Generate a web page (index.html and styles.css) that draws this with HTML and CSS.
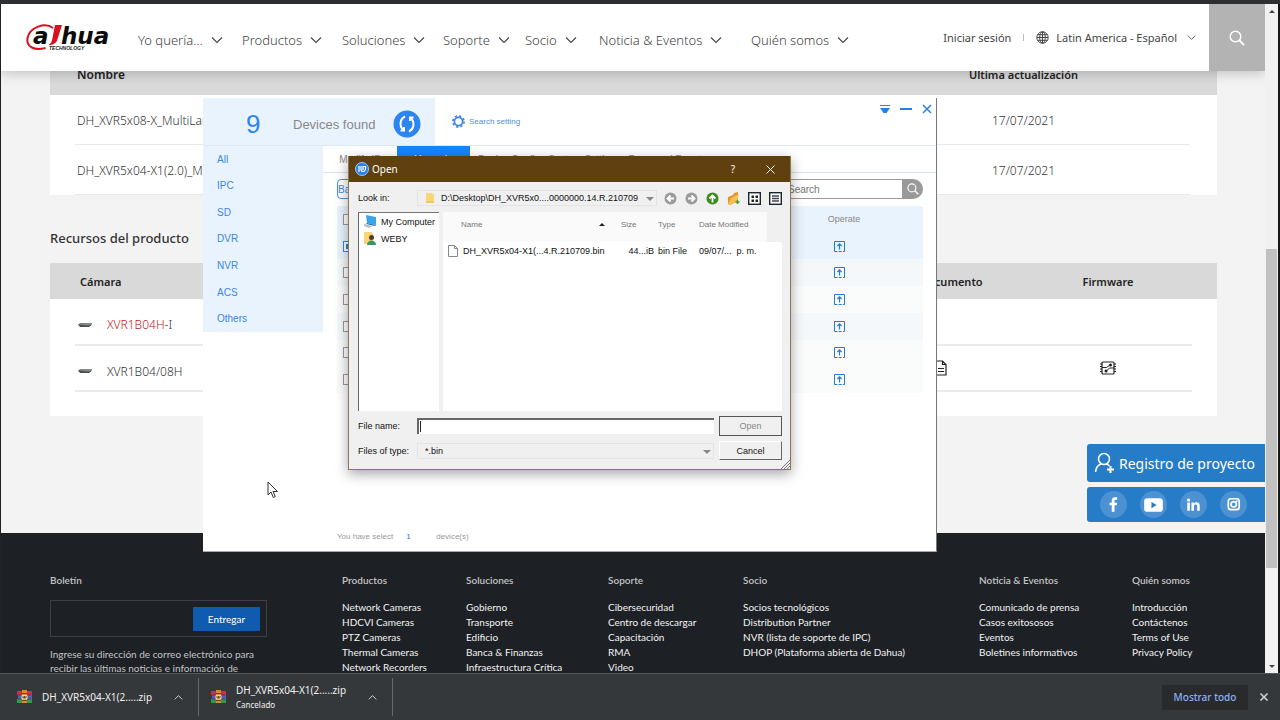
FILE: index.html
```html
<!DOCTYPE html>
<html lang="es">
<head>
<meta charset="utf-8">
<title>Dahua Technology</title>
<link rel="stylesheet" href="styles.css">
</head>
<body>
<svg class="defs" aria-hidden="true">
  <symbol id="chev" viewBox="0 0 12 12"><path d="M1 3.500l5 5 5-5" fill="none" stroke="currentColor" stroke-width="1.100"/></symbol>
  <symbol id="lens" viewBox="0 0 16 16"><circle cx="6.500" cy="6.500" r="5.300" fill="none" stroke="currentColor" stroke-width="1.500"/><path d="M10.400 10.400l4.600 4.600" stroke="currentColor" stroke-width="1.800"/></symbol>
  <symbol id="up" viewBox="0 0 11 11"><path d="M.5 10.500V.5h10v10" fill="none" stroke="currentColor"/><path d="M.5 10.500h10" stroke="currentColor" stroke-dasharray="3 1.200"/><path d="M5.500 8.500V3M3.400 5l2.100-2.200L7.600 5" fill="none" stroke="currentColor" stroke-width="1.200"/></symbol>
  <symbol id="rar" viewBox="0 0 15 14"><path fill="#c3353c" d="M0 1h15v4H0z"/><path fill="#4a63c8" d="M1 5h14v4H1z"/><path fill="#2f9a4c" d="M0 9h15v4H0z"/><path fill="#7a2a60" d="M1 4.400h13v1H1zM1 8.500h13v1H1z"/><path fill="#d88a2e" d="M5 0h5v13H5z"/><path fill="#7a4215" d="M5 3h5v1H5zM5 10h5v1H5z"/><rect x="4.500" y="5" width="6" height="4.500" rx="1" fill="#f4ddb0"/><path d="M6 6v2h3V6M7.500 6v2" stroke="#7a4215" fill="none"/></symbol>
  <symbol id="recorder" viewBox="0 0 14 6"><path d="M0 2.500L3 1h11l-1 2.500L11 5H2z" fill="#4c4f50"/><path d="M0 2.500L3 1h11v1l-3 1.500z" fill="#85898a"/></symbol>
</svg>
<div class="browser">
  <div class="tabstrip"></div>
  <div class="viewport">
    <div class="site">
      <header class="top">
        <a class="logo" href="#" aria-label="Dahua Technology">
          <svg width="86" height="30" viewBox="0 0 86 30">
            <path d="M27 5C19-1 4 4 1.500 15c-1.500 9 7 13 18 10" fill="none" stroke="#d8101e" stroke-width="2"/>
            <text class="logo-word" x="7" y="21">a</text>
            <text class="logo-word" x="35" y="21">hua</text>
            <path d="M29 2h7l-4.600 14.500c-1.300 4-4.200 5.500-8.900 5.500 2.500-1.500 3-3 3.700-5.500z" fill="#d8101e"/>
            <text class="logo-tag" x="23" y="27">TECHNOLOGY</text>
          </svg>
        </a>
        <nav class="nav">
          <a href="#">Yo quería...<svg><use href="#chev"/></svg></a>
          <a href="#">Productos<svg><use href="#chev"/></svg></a>
          <a href="#">Soluciones<svg><use href="#chev"/></svg></a>
          <a href="#">Soporte<svg><use href="#chev"/></svg></a>
          <a href="#">Socio<svg><use href="#chev"/></svg></a>
          <a href="#">Noticia &amp; Eventos<svg><use href="#chev"/></svg></a>
          <a href="#">Quién somos<svg><use href="#chev"/></svg></a>
        </nav>
        <div class="account">
          <a href="#">Iniciar sesión</a><i class="sep"></i>
          <button class="lang" type="button">
            <svg class="globe" viewBox="0 0 13 13"><g fill="none" stroke="currentColor"><circle cx="6.500" cy="6.500" r="5.700"/><ellipse cx="6.500" cy="6.500" rx="2.800" ry="5.700"/><path d="M6.500 1v11M1 6.500h11M1.700 3.700h9.600M1.700 9.300h9.600"/></g></svg>
            Latin America - Español<svg class="mini"><use href="#chev"/></svg>
          </button>
        </div>
        <button class="find" type="button" aria-label="Buscar"><svg width="16" height="16"><use href="#lens"/></svg></button>
      </header>
      <main class="content">
        <table class="firmware">
          <thead><tr><th>Nombre</th><th class="date">Ultima actualización</th></tr></thead>
          <tbody>
            <tr><td>DH_XVR5x08-X_MultiLan</td><td class="date">17/07/2021</td></tr>
            <tr><td>DH_XVR5x04-X1(2.0)_Mu</td><td class="date">17/07/2021</td></tr>
          </tbody>
        </table>
        <h2>Recursos del producto</h2>
        <div class="card">
          <table class="resources">
            <thead><tr><th class="edge"></th><th class="cam">Cámara</th><th class="doc">Documento</th><th class="fw">Firmware</th><th class="edge"></th></tr></thead>
            <tbody>
              <tr><td class="edge"></td><td class="line"><a class="device current" href="#"><svg width="14" height="6"><use href="#recorder"/></svg><span>XVR1B04H<b>-I</b></span></a></td><td class="line"></td><td class="line"></td><td class="edge"></td></tr>
              <tr><td class="edge"></td><td class="line"><a class="device" href="#"><svg width="14" height="6"><use href="#recorder"/></svg><span>XVR1B04/08H</span></a></td>
              <td class="line doc"><svg width="12" height="16" viewBox="0 0 12 16"><path d="M1 1h6.500L11 4.500V15H1zM7.500 1v3.500H11M3 8.500h6M3 11.500h6" fill="none" stroke="#222" stroke-width="1.200"/></svg></td>
              <td class="line fw"><svg width="16" height="14" viewBox="0 0 16 14"><rect x="2" y="1" width="12" height="12" rx="1" fill="none" stroke="#222" stroke-width="1.200"/><path d="M0 3h2M0 5.500h2M0 8h2M0 10.500h2M14 3h2M14 5.500h2M14 8h2M14 10.500h2M2 6.500h4.500l3.500-2.500M14 7H9.500L6.500 10" stroke="#222" fill="none"/><circle cx="10.500" cy="4" r="1.500" fill="#222"/><circle cx="6" cy="10" r="1.500" fill="#222"/></svg></td><td class="edge"></td></tr>
            </tbody>
          </table>
        </div>
      </main>
      <footer class="foot">
        <section class="newsletter">
          <h3><label for="mail">Boletín</label></h3>
          <form><input id="mail" type="email"><button type="button">Entregar</button></form>
          <p>Ingrese su dirección de correo electrónico para recibir las últimas noticias e información de</p>
        </section>
        <section><h3>Productos</h3><a href="#">Network Cameras</a><a href="#">HDCVI Cameras</a><a href="#">PTZ Cameras</a><a href="#">Thermal Cameras</a><a href="#">Network Recorders</a></section>
        <section><h3>Soluciones</h3><a href="#">Gobierno</a><a href="#">Transporte</a><a href="#">Edificio</a><a href="#">Banca &amp; Finanzas</a><a href="#">Infraestructura Crítica</a></section>
        <section><h3>Soporte</h3><a href="#">Cibersecuridad</a><a href="#">Centro de descargar</a><a href="#">Capacitación</a><a href="#">RMA</a><a href="#">Video</a></section>
        <section><h3>Socio</h3><a href="#">Socios tecnológicos</a><a href="#">Distribution Partner</a><a href="#">NVR (lista de soporte de IPC)</a><a href="#">DHOP (Plataforma abierta de Dahua)</a></section>
        <section><h3>Noticia &amp; Eventos</h3><a href="#">Comunicado de prensa</a><a href="#">Casos exitososos</a><a href="#">Eventos</a><a href="#">Boletines informativos</a></section>
        <section><h3>Quién somos</h3><a href="#">Introducción</a><a href="#">Contáctenos</a><a href="#">Terms of Use</a><a href="#">Privacy Policy</a></section>
      </footer>
      <aside class="floating">
        <a class="register" href="#"><svg width="22" height="22" viewBox="0 0 22 22"><g fill="none" stroke="#fff" stroke-width="1.500"><circle cx="10" cy="7" r="5.500"/><path d="M1.500 20c.5-4.500 3-7.300 6-8M12 12c1.500.4 2.500 1 3.500 2"/><path d="M16.500 14v7M13 17.500h7" stroke-width="2"/></g></svg>Registro de proyecto</a>
        <div class="social">
          <a href="#" aria-label="Facebook"><svg viewBox="0 0 26 26"><path fill="#fff" d="M11.300 20v-6.200H9.200v-2.500h2.100V9.400c0-2.400 1.300-3.400 3.200-3.400h2v2.400h-1.300c-.9 0-1.200.4-1.200 1.200v1.700h2.500l-.4 2.500H14V20z"/></svg></a>
          <a href="#" aria-label="YouTube"><svg viewBox="0 0 26 26"><rect x="4" y="7" width="18" height="13" rx="3" fill="#fff"/><path d="M11 10.500v6l5-3z" fill="#267cc6"/></svg></a>
          <a href="#" aria-label="LinkedIn"><svg viewBox="0 0 26 26"><path fill="#fff" d="M7 11h2.500v8H7zM7 7.500h2.500V10H7zM11 11h2.400v1.200c1.300-2.100 5.600-1.900 5.600 1.800v5h-2.500v-4.500c0-2-3-2-3 0V19H11z"/></svg></a>
          <a href="#" aria-label="Instagram"><svg viewBox="0 0 26 26"><g fill="none" stroke="#fff" stroke-width="1.600"><rect x="8" y="7.500" width="10.500" height="10.500" rx="2.500"/><circle cx="13.200" cy="12.800" r="2.600"/></g><circle cx="16.200" cy="9.800" r=".9" fill="#fff"/></svg></a>
        </div>
      </aside>
    </div>
    <div class="scrollbar"><span class="arrow"></span><span class="thumb"></span><span class="arrow down"></span></div>
  </div>
  <div class="downloads">
    <button class="dl" type="button"><svg width="15" height="14"><use href="#rar"/></svg><span class="file">DH_XVR5x04-X1(2.....zip</span><svg class="caret"><use href="#chev"/></svg></button>
    <button class="dl" type="button"><svg width="15" height="14"><use href="#rar"/></svg><span class="file">DH_XVR5x04-X1(2.....zip<small>Cancelado</small></span><svg class="caret"><use href="#chev"/></svg></button>
    <button class="showall" type="button">Mostrar todo</button>
    <button class="close" type="button" aria-label="Cerrar"><svg width="10" height="10" viewBox="0 0 10 10"><path d="M1.500 1.500l7 7m0-7l-7 7" stroke="#d5d7d9" stroke-width="1.500"/></svg></button>
  </div>
</div>

<div class="tool">
  <div class="tool-head">
    <div class="found"><strong>9</strong><span>Devices found</span>
      <button type="button" aria-label="Refresh"><svg width="28" height="28" viewBox="0 0 28 28"><circle cx="14" cy="14" r="13.500" fill="#2d84f3"/><g fill="none" stroke="#fff" stroke-width="2"><path d="M12 6.500a8 8 0 0 0-2 13M16 21.500A8 8 0 0 0 18 8.500"/><path d="M7.500 20.500h3.500V17M20.500 7.500H17V11"/></g></svg></button>
    </div>
    <button class="setting" type="button"><svg width="13" height="13" viewBox="0 0 13 13"><circle cx="6.500" cy="6.500" r="5.600" fill="none" stroke="#3d86dc" stroke-width="1.600" stroke-dasharray="2.200"/><circle cx="6.500" cy="6.500" r="4.100" fill="none" stroke="#3d86dc" stroke-width="1.700"/></svg>Search setting</button>
    <div class="winctl">
      <button type="button" aria-label="Menu"><svg width="10" height="10" viewBox="0 0 10 10"><path d="M0 1.500h10" stroke="#2680e8"/><path d="M0 4h10L6.500 9h-3z" fill="#2680e8"/></svg></button>
      <button type="button" aria-label="Minimize"><svg width="12" height="10" viewBox="0 0 12 10"><path d="M0 5h12" stroke="#2680e8" stroke-width="2"/></svg></button>
      <button type="button" aria-label="Close"><svg width="10" height="10" viewBox="0 0 10 10"><path d="M1 1l8 8m0-8L1 9" stroke="#2680e8" stroke-width="1.500"/></svg></button>
    </div>
  </div>
  <div class="tool-body">
    <nav class="kinds"><a href="#">All</a><a href="#">IPC</a><a href="#">SD</a><a href="#">DVR</a><a href="#">NVR</a><a href="#">ACS</a><a href="#">Others</a></nav>
    <div class="tool-main">
      <div class="tabs"><button type="button">Modify IP</button><button class="on" type="button">Upgrade</button><button type="button">Device Config</button><button type="button">System Settings</button><button type="button">Password Reset</button></div>
      <div class="work">
        <div class="bar"><button class="batch" type="button">Batch Upgrade</button>
          <div class="search"><input type="text" placeholder="Search" aria-label="Search"><button type="button" aria-label="Search"><svg width="12" height="12"><use href="#lens" width="12" height="12"/></svg></button></div></div>
        <table class="devices">
          <tr><th class="tick"><input type="checkbox" aria-label="All"></th><th></th><th class="op">Operate</th></tr>
          <tr class="sel"><td class="tick"><input type="checkbox" checked aria-label="Device 1"></td><td></td><td class="op"><button type="button" aria-label="Upgrade 1"><svg><use href="#up"/></svg></button></td></tr>
          <tr><td class="tick"><input type="checkbox" aria-label="Device 2"></td><td></td><td class="op"><button type="button" aria-label="Upgrade 2"><svg><use href="#up"/></svg></button></td></tr>
          <tr><td class="tick"><input type="checkbox" aria-label="Device 3"></td><td></td><td class="op"><button type="button" aria-label="Upgrade 3"><svg><use href="#up"/></svg></button></td></tr>
          <tr><td class="tick"><input type="checkbox" aria-label="Device 4"></td><td></td><td class="op"><button type="button" aria-label="Upgrade 4"><svg><use href="#up"/></svg></button></td></tr>
          <tr><td class="tick"><input type="checkbox" aria-label="Device 5"></td><td></td><td class="op"><button type="button" aria-label="Upgrade 5"><svg><use href="#up"/></svg></button></td></tr>
          <tr><td class="tick"><input type="checkbox" aria-label="Device 6"></td><td></td><td class="op"><button type="button" aria-label="Upgrade 6"><svg><use href="#up"/></svg></button></td></tr>
        </table>
        <p class="count">You have select <b>1</b> <span>device(s)</span></p>
      </div>
    </div>
  </div>
</div>

<div class="dialog" role="dialog" aria-labelledby="dlg">
  <div class="title">
    <svg width="14" height="14" viewBox="0 0 14 14"><circle cx="7" cy="7" r="6.500" fill="#2e7fe6" stroke="#9cc6f7"/><path d="M4 4v6M6 4v3q0 2.500 2 2.500T10.500 7V4.500H8V8" fill="none" stroke="#fff" stroke-width="1.200"/></svg>
    <span id="dlg">Open</span>
    <button type="button" aria-label="Help">?</button>
    <button type="button" aria-label="Close"><svg width="9" height="9" viewBox="0 0 9 9"><path d="M.5.500l8 8m0-8l-8 8" stroke="#fff"/></svg></button>
  </div>
  <div class="look">
    <label for="dir">Look in:</label>
    <div class="combo"><svg class="folder" width="8" height="10" viewBox="0 0 8 10"><path d="M0 0h6l2 2v8H0z" fill="#f8d775"/><path d="M0 9h8" stroke="#e8b94a"/></svg><select id="dir"><option>D:\Desktop\DH_XVR5x0....0000000.14.R.210709</option></select></div>
    <div class="icons">
      <button type="button" aria-label="Back"><svg width="13" height="13" viewBox="0 0 13 13"><circle cx="6.500" cy="6.500" r="6" fill="#9b9b9b"/><path d="M10 6.500H4M6.500 3.500l-3 3 3 3" fill="none" stroke="#fff" stroke-width="1.800"/></svg></button>
      <button type="button" aria-label="Forward"><svg width="13" height="13" viewBox="0 0 13 13"><circle cx="6.500" cy="6.500" r="6" fill="#9b9b9b"/><path d="M3 6.500h6M6.500 3.500l3 3-3 3" fill="none" stroke="#fff" stroke-width="1.800"/></svg></button>
      <button type="button" aria-label="Parent"><svg width="13" height="13" viewBox="0 0 13 13"><circle cx="6.500" cy="6.500" r="6" fill="#3c8c1c"/><path d="M6.500 10.500V4M3.500 6.500l3-3 3 3" fill="none" stroke="#fff" stroke-width="1.800"/></svg></button>
      <button type="button" aria-label="New folder"><svg width="13" height="13" viewBox="0 0 13 13"><path d="M1 5l5-2 1-2 4-1v9l-8 4-2-1z" fill="#e8932a"/><path d="M1 12l3-6 8-4-2 7-7 4z" fill="#f9c04f"/><path d="M10.500 8v4M8.500 10h4" stroke="#4d9a32" stroke-width="1.600"/></svg></button>
      <button type="button" aria-label="List"><svg width="13" height="13" viewBox="0 0 13 13"><rect x=".7" y=".7" width="11.600" height="11.600" fill="#fff" stroke="#1c2430" stroke-width="1.400"/><path d="M3.500 3.500H6V6H3.500zM7.500 3.500H10V6H7.500zM3.500 7.500H6V10H3.500zM7.500 7.500H10V10H7.500z" fill="#222"/></svg></button>
      <button type="button" aria-label="Details"><svg width="13" height="13" viewBox="0 0 13 13"><rect x=".7" y=".7" width="11.600" height="11.600" fill="#fff" stroke="#1c2430" stroke-width="1.400"/><path d="M3 4h7M3 6.500h7M3 9h7" stroke="#445" stroke-width="1.400"/></svg></button>
    </div>
  </div>
  <div class="panes">
    <ul class="places">
      <li><svg width="15" height="13" viewBox="0 0 15 13"><path d="M3 0l10 2v8L4 8z" fill="#3aa4e8"/><path d="M4 8l9 2-1 1-9-2z" fill="#1c75b8"/><path d="M1 9l9 2-4 2-5-2z" fill="#b9c0c8"/></svg>My Computer</li>
      <li><svg width="15" height="13" viewBox="0 0 15 13"><path d="M1 0h7l2 2v10H1z" fill="#f6d573"/><circle cx="8.500" cy="5.500" r="2.500" fill="#5a3a22"/><path d="M4 13c0-6 9-6 9 0z" fill="#3c9468"/></svg>WEBY</li>
    </ul>
    <div class="listing">
      <table>
        <thead><tr><th class="c-name"><span class="sortable">Name<i class="sort"></i></span></th><th class="c-size">Size</th><th class="c-type">Type</th><th>Date Modified</th></tr></thead>
        <tbody><tr><td><span class="entry"><svg width="10" height="12" viewBox="0 0 10 12"><path d="M.5.500h6l3 3v8h-9zM6.500.500v3h3" fill="#fdfdfd" stroke="#888"/></svg>DH_XVR5x04-X1(...4.R.210709.bin</span></td><td class="r">44...iB</td><td>bin File</td><td>09/07/...&nbsp; p. m.</td></tr></tbody>
      </table>
    </div>
  </div>
  <div class="fields">
    <label for="fn">File name:</label><input id="fn" type="text"><button class="ok" type="button" disabled>Open</button>
    <label for="ft">Files of type:</label><div class="combo type"><select id="ft"><option>*.bin</option></select></div><button type="button">Cancel</button>
  </div>
  <svg class="grip" width="9" height="9" viewBox="0 0 9 9"><path d="M0 9l9-9M3 9l6-6M6 9l3-3" stroke="#777"/></svg>
</div>
<svg class="pointer" width="12" height="18" viewBox="0 0 12 18"><path d="M1 1v13l3-3 2.300 5.500 2-1L6 10.500h4.500z" fill="#fff" stroke="#333"/></svg>
</body>
</html>
```
FILE: styles.css
```css
* { box-sizing: border-box; }
body { margin: 0; overflow: hidden; font-family: "Noto Sans", "Open Sans", sans-serif; color: #333; font-size: 12px; }
a { color: inherit; text-decoration: none; }
button { border: 0; padding: 0; background: none; color: inherit; font: inherit; }
input, select { font: inherit; color: inherit; margin: 0; }
svg { display: block; flex: none; }
table { border-collapse: collapse; }
.defs { position: absolute; width: 0; height: 0; }

/* Browser frame */
.browser { height: 100vh; display: flex; flex-direction: column; background: #35383b; }
.tabstrip { height: 4px; flex: none; background: #2d3033; }
.viewport { flex: 1; min-height: 0; display: flex; border-left: 1px solid #222; border-right: 2px solid #161616; }
.site { flex: 1; min-width: 0; position: relative; overflow: hidden; background: #f3f3f3; }
.scrollbar { width: 13px; display: flex; flex-direction: column; align-items: center; background: #f1f1f1; padding: 6px 0 5px; }
.arrow { border: 3px solid transparent; border-top-width: 0; border-bottom: 3px solid #444; }
.arrow.down { transform: rotate(180deg); margin-top: auto; }
.thumb { width: 11px; height: 48.5%; margin-top: 236px; background: #c1c1c1; }

/* Site header */
.top { position: relative; z-index: 1; height: 67px; display: flex; align-items: center; background: #fff; box-shadow: 0 2px 12px rgba(0,0,0,.22); color: #444; }
.logo { margin: 0 26px 0 25px; }
.logo svg { overflow: visible; }
.logo-word { font: italic 700 23px "DejaVu Sans", sans-serif; fill: #0b0b0b; }
.logo-tag { font: italic 700 5px "Liberation Sans", sans-serif; fill: #222; }
.nav { display: grid; grid-template-columns: 104px 100px 101px 82px 74px 152px 110px; font-size: 13px; font-weight: 300; padding-top: 4px; }
.nav a { display: flex; align-items: center; gap: 8px; white-space: nowrap; }
.nav svg { width: 12px; height: 12px; }
.account { margin-left: auto; margin-right: 13px; display: flex; align-items: center; gap: 12px; font-size: 11px; font-weight: 400; white-space: nowrap; }
.sep { width: 1px; height: 7px; background: #bbb; }
.lang { display: flex; align-items: center; gap: 7px; }
.globe { width: 13px; height: 13px; }
.mini { width: 9px; height: 9px; margin-left: 3px; }
.find { align-self: stretch; width: 56px; display: grid; place-items: center; background: #b3b3b3; color: #fff; }

/* Page content */
.content { margin-top: -18px; padding: 0 48px 0 49px; }
.content table { width: 100%; text-align: left; }
.content th { background: #d9d9d9; font-weight: 600; font-size: 12px; color: #222; padding: 0; }
.content td { padding: 0; font-weight: 300; }
.firmware { background: #fff; }
.firmware th { height: 42px; padding-left: 27px; }
.firmware td { height: 50px; padding-left: 27px; background: linear-gradient(#e8e8e8, #e8e8e8) 25px 100% / 100% 1px no-repeat; }
.content .firmware .date { width: 387px; text-align: center; padding: 0; }
.content th.date { font-size: 11px; }
.firmware td.date { background: linear-gradient(#e8e8e8, #e8e8e8) -27px 100% / 100% 1px no-repeat; }
h2 { margin: 33px 0 14px; font-size: 13px; line-height: 21px; font-weight: 500; color: #333; }
.card { background: #fff; padding-bottom: 24px; }
.resources { table-layout: fixed; }
.resources .edge { width: 25px; }
.resources th { height: 36px; font-size: 11px; }
.resources th.cam { padding-left: 5px; }
.resources td { height: 46px; }
.resources .line { border-bottom: 2px solid #ebebeb; }
.resources .doc { width: 118px; }
.resources th.doc { padding-left: 14px; }
.resources td.doc { padding-left: 29px; }
.resources .fw { width: 168px; text-align: center; padding: 0; }
.resources td.fw svg { margin: 0 auto; }
.device { display: flex; align-items: center; gap: 15px; padding: 6px 0 0 3px; }
.current { color: #c4161f; }
.current b { font-weight: 300; color: #333; }

/* Footer */
.foot { margin-top: 117px; height: 200px; padding: 39px 48px 0 49px; display: grid; grid-template-columns: 292fr 124fr 142fr 135fr 236fr 153fr 85fr; background: #1d2024; color: #f4f4f4; font-family: Lato, "Noto Sans", sans-serif; font-size: 10px; white-space: nowrap; }
.foot section { min-width: 0; }
.foot h3 { margin: 0 0 11px; font-size: 10px; line-height: 17px; font-weight: 600; color: #c4c4c4; }
.foot a { display: block; line-height: 15px; }
.foot form { display: flex; width: 217px; height: 37px; border: 1px solid #3d3f42; padding: 6px; }
.foot input { flex: 1; min-width: 0; border: 0; background: none; outline: 0; }
.foot form button { width: 67px; height: 24px; background: #0f5bb0; color: #fff; border-radius: 1px; }
.foot p { margin: 10px 0 0; width: 217px; white-space: normal; line-height: 14px; color: #c4c4c4; }

/* Contact tabs floating over the page */
.floating { position: absolute; right: 0; bottom: 151px; width: 178px; }
.register { display: flex; align-items: center; height: 38px; padding-left: 7px; gap: 3px; margin-bottom: 5px; background: #267cc6; color: #fff; font-size: 14px; border-radius: 3px 0 0 3px; white-space: nowrap; }
.social { display: flex; align-items: center; gap: 13px; height: 35px; padding-left: 13px; background: #267cc6; border-radius: 3px 0 0 3px; }
.social a { width: 27px; height: 27px; border-radius: 50%; background: #4c92d3; }

/* Download shelf */
.downloads { height: 47px; flex: none; display: flex; align-items: center; border-top: 1px solid #56595c; color: #f0f0f0; font-size: 10px; }
.dl { width: 194px; height: 38px; display: flex; align-items: center; gap: 10px; padding: 0 15px 0 12px; text-align: left; border-right: 1px solid #66696c; }
.dl:first-child { width: 199px; padding-left: 17px; }
.file { flex: 1; white-space: nowrap; line-height: 16px; }
.file small { display: block; font-size: 8px; line-height: 14px; }
.caret { width: 9px; height: 9px; transform: rotate(180deg); }
.showall { margin-left: auto; width: 86px; height: 25px; background: #282a2c; color: #8ab0f5; font-weight: 500; }
.close { margin: 0 11px 0 11px; }

/* Device tool window */
.tool { position: absolute; left: 203px; top: 98px; width: 734px; height: 454px; display: flex; flex-direction: column; background: #fff; border-right: 1px solid #777; border-bottom: 1px solid #aaa; font-family: "Liberation Sans", sans-serif; font-size: 10px; color: #888; }
.tool-head { display: flex; height: 48px; border-bottom: 1px solid #dbeaf4; }
.found { width: 232px; display: flex; align-items: center; background: #e9f3fd; padding-left: 43px; padding-top: 5px; color: #888; font-size: 13px; white-space: nowrap; }
.found strong { width: 47px; font-size: 26px; font-weight: 400; color: #2d84f3; }
.found button { margin-left: auto; margin-right: 14px; }
.setting { display: flex; align-items: center; gap: 4px; margin-left: 17px; color: #4f8fdb; font-size: 8px; }
.winctl { margin-left: auto; align-self: flex-start; display: flex; gap: 10px; padding: 6px 4px; }
.tool-body { display: flex; align-items: flex-start; flex: 1; }
.kinds { width: 120px; height: 186px; display: grid; grid-template-rows: repeat(7, 1fr); align-items: center; padding-left: 14px; background: #e9f3fd; color: #3d86dc; }
.tool-main { flex: 1; align-self: stretch; display: flex; flex-direction: column; }
.tabs { display: flex; height: 27px; border-bottom: 1px solid #d3e4ec; }
.tabs button { padding: 0 4px; white-space: nowrap; }
.tabs button:first-child { width: 74px; }
.tabs .on { width: 73px; background: #1784fa; color: #fff; margin-right: 4px; padding: 0; }
.work { flex: 1; display: flex; flex-direction: column; padding: 6px 13px 9px 14px; }
.bar { display: flex; justify-content: space-between; height: 20px; margin-bottom: 7px; }
.batch { width: 68px; border: 1px solid #4790df; border-radius: 4px; color: #3d86dc; white-space: nowrap; }
.search { display: flex; width: 150px; }
.search input { flex: 1; min-width: 0; border: 1px solid #999; border-right: 0; border-radius: 10px 0 0 10px; padding: 0 14px; }
.search button { width: 21px; display: grid; place-items: center; border-radius: 0 10px 10px 0; background: #999; color: #fff; }
.devices { width: 100%; height: 187px; }
.devices th, .devices td { padding: 0; font-weight: 400; font-size: 9px; color: #888; }
.devices tr { background: #fafbfb; }
.devices tr:nth-child(odd) { background: #f4f8fa; }
.devices tr:nth-child(7) { background: #fafbfb; }
.devices tr:first-child, .devices .sel { background: #e9f3fd; }
.devices .tick { width: 22px; padding-left: 6px; text-align: left; }
.tick input { appearance: none; display: block; width: 11px; height: 11px; border: 1px solid #999; background: #fff; }
.tick input:checked { border-color: #3d86dc; background: #2680e8; box-shadow: inset 0 0 0 2px #fff; }
.devices .op { width: 158px; text-align: center; }
.op button { display: block; margin: 0 auto; width: 11px; height: 11px; }
.op svg { width: 11px; height: 11px; color: #2878d0; }
.devices td.op { padding-right: 10px; }
.count { margin: auto 0 0; display: flex; font-size: 8px; line-height: 11px; color: #999; }
.count b { width: 30px; margin-left: 13px; font-weight: 400; color: #2d6fe0; }

/* File dialog */
.dialog { position: absolute; left: 348px; top: 156px; width: 443px; height: 314px; display: flex; flex-direction: column; background: #f0f0f0; border: 1px solid #8d7656; border-top: 0; box-shadow: 0 4px 12px rgba(0,0,0,.35); font: 9px "Liberation Sans", sans-serif; color: #111; }
.title { height: 26px; flex: none; display: flex; align-items: center; padding: 0 15px 0 6px; background: #60400f; color: #fff; font: 10px "Noto Sans", sans-serif; }
.title span { margin: 0 auto 0 3px; }
.title button { margin-left: 31px; }
.look { display: grid; grid-template-columns: 59px 240px auto; align-items: center; padding: 8px 8px 4px 9px; }
.combo { display: flex; align-items: center; height: 16px; border: 1px solid #e4e4e4; position: relative; padding-left: 8px; }
.combo select { flex: 1; min-width: 0; width: 100%; appearance: none; border: 0; background: none; padding: 0 0 0 7px; }
.combo::after { content: ""; position: absolute; right: 2px; top: 6px; border: 4px solid transparent; border-top-color: #888; border-bottom-width: 0; }
.combo.type { padding: 0; }
.icons { display: flex; gap: 8px; justify-content: flex-end; }
.panes { display: flex; gap: 4px; height: 199px; margin: 2px 8px 0 9px; }
.places { width: 81px; margin: 0; padding: 0 0 0 4px; list-style: none; background: #fff; border-top: 1px solid #777; border-left: 1px solid #666; }
.places li { display: flex; align-items: center; gap: 3px; height: 17px; white-space: nowrap; }
.listing { flex: 1; background: #fff; }
.listing table { width: 100%; table-layout: fixed; }
.listing th { height: 30px; padding: 0 0 5px; text-align: left; font-size: 8px; font-weight: 400; color: #777; background: #fafafa; white-space: nowrap; }
.listing th:last-child { border-right: 15px solid #f0f0f0; }
.listing .c-name { width: 178px; padding-left: 18px; }
.c-size { width: 37px; }
.c-type { width: 41px; }
.listing td { padding: 0; height: 17px; white-space: nowrap; }
.listing td.r { text-align: right; padding-right: 4px; }
.entry { display: flex; align-items: center; gap: 5px; padding-left: 5px; }
.sortable { display: flex; align-items: center; justify-content: space-between; padding-right: 16px; }
.sort { border: 3px solid transparent; border-top: 0; border-bottom-color: #222; }
.fields { display: grid; grid-template-columns: 59px 1fr 63px; grid-template-rows: 20px 19px; row-gap: 5px; align-items: center; padding: 5px 8px 0 9px; }
.fields input { height: 16px; margin-right: 5px; border: 0; border-top: 2px solid #666; border-left: 2px solid #666; background: linear-gradient(#222, #222) 1px 1px / 1px 11px no-repeat #fff; }
.fields .combo { margin-right: 5px; }
.fields button { align-self: stretch; border: 1px solid; border-color: #fff #666 #666 #fff; }
.fields .ok { border-color: #555; color: #888; }
.grip { position: absolute; right: 0; bottom: 0; }
.pointer { position: absolute; left: 267px; top: 481px; }
```
